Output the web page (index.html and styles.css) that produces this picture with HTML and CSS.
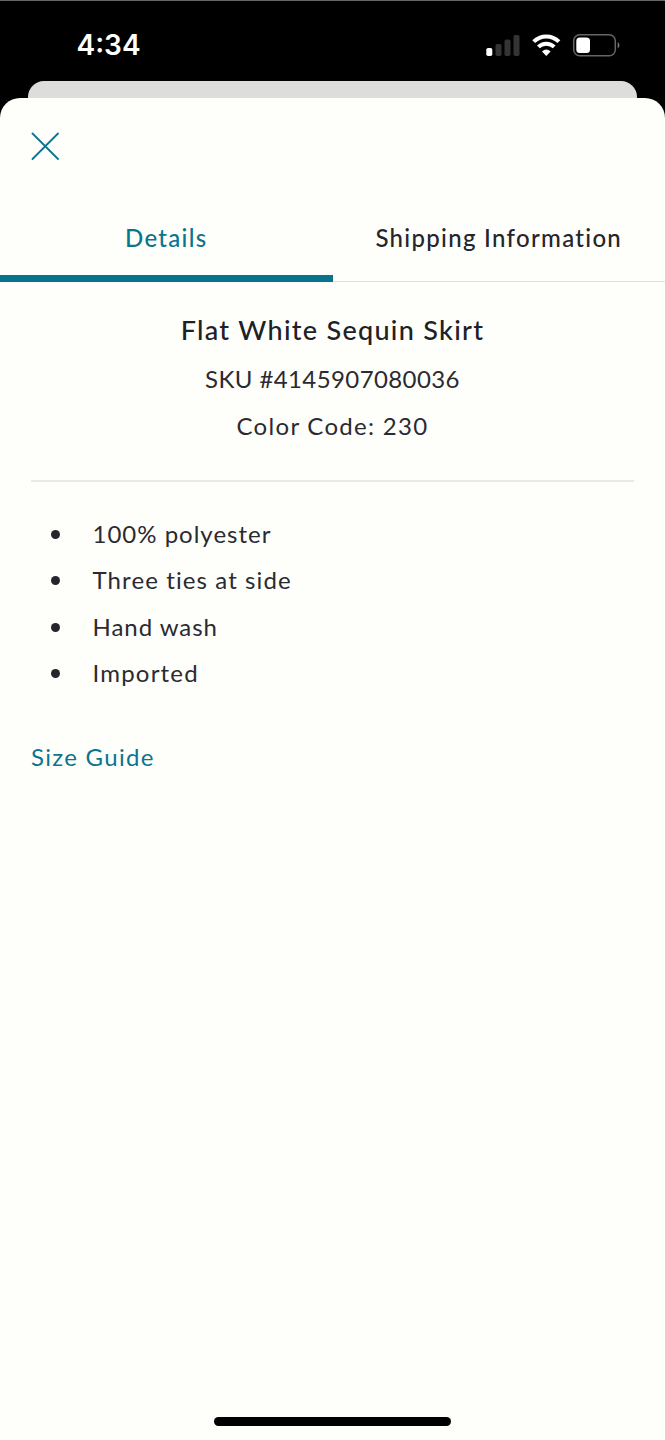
FILE: index.html
```html
<!DOCTYPE html>
<html lang="en">
<head>
<meta charset="utf-8">
<title>Product details</title>
<link rel="stylesheet" href="styles.css">
</head>
<body>
<header class="status">
  <span class="time">4:34</span>
  <svg class="status-icons" width="136" height="24" viewBox="0 0 136 24">
    <rect x="2.300" y="15" width="6" height="8" rx="1.8" fill="#fff"/>
    <g fill="#343434"><rect x="11.5" y="11" width="6" height="12" rx="1.8"/><rect x="20.5" y="6.500" width="6" height="16.500" rx="1.8"/><rect x="29.500" y="2" width="6" height="21" rx="1.8"/></g>
    <g fill="none" stroke="#fff" stroke-width="4"><path d="M49.700 8.700a17.700 17.700 0 0 1 25.200 0"/><path d="M54.400 13.900a11.200 11.200 0 0 1 15.800 0"/></g>
    <path d="M58 18.400q4.300-3.800 8.600 0l-4.300 4.600z" fill="#fff"/>
    <rect x="89.700" y="1.700" width="41.600" height="21" rx="6" fill="none" stroke="#666" stroke-width="1.500"/>
    <rect x="92.300" y="4.500" width="13.700" height="15.500" rx="3.500" fill="#fff"/>
    <path d="M133.700 9v6.500q1.700-.8 1.700-3.250t-1.700-3.250" fill="#777"/>
  </svg>
</header>
<div class="backdrop"></div>
<main class="sheet">
  <button class="close" aria-label="Close">
    <svg width="28" height="28" viewBox="0 0 28 28"><path d="M1.500 1.500l25.500 25.500M27 1.500L1.500 27" stroke="#0b7590" stroke-width="1.800" stroke-linecap="round"/></svg>
  </button>
  <nav class="tabs">
    <a class="tab active">Details</a>
    <a class="tab">Shipping Information</a>
  </nav>
  <section class="product">
    <h1>Flat White Sequin Skirt</h1>
    <p class="sku">SKU #4145907080036</p>
    <p class="color">Color Code: 230</p>
  </section>
  <ul class="facts">
    <li><span class="polyester">100% polyester</span></li>
    <li><span class="ties">Three ties at side</span></li>
    <li><span class="wash">Hand wash</span></li>
    <li><span class="imported">Imported</span></li>
  </ul>
  <a class="guide">Size Guide</a>
  <div class="home"></div>
</main>
</body>
</html>
```
FILE: styles.css
```css
* { box-sizing: border-box; }
body {
  margin: 0;
  height: 1440px;
  display: flex;
  flex-direction: column;
  background: #000;
  color: #2a2a32;
  font: 24px/46.4px Lato, "Open Sans", sans-serif;
  letter-spacing: 1.3px;
}
.status {
  height: 81px;
  padding: 7px 45px 0 76.500px;
  border-top: 1px solid #666;
  display: flex;
  justify-content: space-between;
  align-items: center;
  flex: none;
}
.time {
  color: #fff;
  font: 600 28px/34px Inter, sans-serif;
  letter-spacing: 0;
}
.status-icons { display: block; }
.backdrop {
  height: 17px;
  flex: none;
  margin: 0 28px;
  background: #dddddc;
  border-radius: 16px 16px 0 0;
}
.sheet {
  flex: 1;
  display: flex;
  flex-direction: column;
  background: #fefffa;
  border-radius: 20px 20px 0 0;
}
.close {
  width: 28px;
  height: 28px;
  margin: 34px 0 0 31px;
  padding: 0;
  border: 0;
  background: none;
}
.close svg { display: block; }
.tabs {
  display: flex;
  height: 84px;
  margin-top: 38px;
}
.tab {
  flex: 1;
  padding-top: 17px;
  text-align: center;
  color: #25252d;
  font-weight: 500;
  letter-spacing: 1.3px;
  border-bottom: 1px solid #e2e3df;
}
.tab.active {
  color: #0b7590;
  border-bottom: 7px solid #08738c;
}
.product {
  height: 200px;
  margin: 0 31px;
  padding-top: 25px;
  text-align: center;
  border-bottom: 2px solid #e9eae7;
}
h1 {
  margin: 0 0 2.700px;
  color: #202027;
  font-size: 27px;
  font-weight: 500;
  letter-spacing: 1.3px;
}
p { margin: 0; }
.sku { letter-spacing: 0.400px; }
.facts {
  list-style: none;
  margin: 29px 0 0;
  padding: 0 0 0 51px;
}
.facts li {
  display: flex;
  align-items: center;
  gap: 32.500px;
}
.facts li::before {
  content: "";
  width: 9px;
  height: 9px;
  border-radius: 50%;
  background: #25252d;
}
.polyester { letter-spacing: 1px; }
.ties { letter-spacing: 1.100px; }
.wash { letter-spacing: 0.950px; }
.imported { letter-spacing: 1.200px; }
.guide {
  margin: 37.500px 0 0 31px;
  color: #0b7590;
}
.home {
  width: 237px;
  height: 9px;
  margin: auto auto 14px;
  border-radius: 5px;
  background: #000;
}
```
